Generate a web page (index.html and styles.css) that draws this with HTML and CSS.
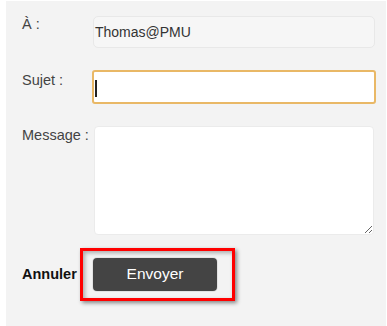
FILE: index.html
```html
<!DOCTYPE html>
<html lang="fr">
<head>
<meta charset="utf-8">
<title>Message</title>
<link rel="stylesheet" href="styles.css">
</head>
<body>
<div class="panel">
  <form class="form">
    <div class="label">À :</div>
    <div class="field field-readonly">Thomas@PMU</div>

    <div class="label label-sujet">Sujet :</div>
    <div class="field field-focus"><span class="caret"></span></div>

    <div class="label label-message">Message :</div>
    <textarea class="message"></textarea>

    <div class="cancel">Annuler</div>
    <div class="send-wrap">
      <button type="button" class="send">Envoyer</button>
    </div>
  </form>
</div>
</body>
</html>
```

FILE: styles.css
```css
html, body {
  margin: 0;
  padding: 0;
  background: #ffffff;
}

body {
  font-family: "Liberation Sans", Arial, sans-serif;
  overflow: hidden;
}

.panel {
  margin: 1px 1px 0 6px;
  background: #f3f3f3;
  height: 325px;
  box-sizing: border-box;
  padding: 15px 11px 0 16px;
}

.form {
  display: grid;
  grid-template-columns: 71px 282px;
  row-gap: 22px;
  margin: 0;
}

.label {
  font-size: 14.5px;
  line-height: 17px;
  color: #434343;
}

.label-sujet {
  padding-top: 2px;
}

.label-message {
  padding-top: 1px;
}

.field {
  box-sizing: border-box;
}

.field-readonly {
  height: 32px;
  background: #f6f6f6;
  border: 1px solid #e8e8e8;
  border-radius: 5px;
  font-size: 14px;
  line-height: 30px;
  color: #333333;
  padding-left: 1px;
}

.field-focus {
  height: 34px;
  margin: 0 -1px;
  background: #ffffff;
  border: 2px solid #e9b866;
  border-radius: 3px;
  display: flex;
  align-items: center;
  padding-left: 1px;
}

.caret {
  display: block;
  width: 1.5px;
  height: 17px;
  background: #222222;
  margin-top: 2px;
}

.message {
  display: block;
  box-sizing: border-box;
  height: 109px;
  width: 280px;
  margin: 0 0 0 1px;
  border: 1px solid #ebebeb;
  border-radius: 4px;
  background: #ffffff;
  resize: both;
  font-family: inherit;
}

.cancel {
  font-size: 14.5px;
  font-weight: bold;
  line-height: 17px;
  color: #111111;
  align-self: center;
  margin-top: 1px;
}

.send-wrap {
  position: relative;
  width: 124px;
  margin-top: 1px;
}

.send-wrap::after {
  content: "";
  position: absolute;
  top: -10px;
  left: -13px;
  right: -18px;
  bottom: -10px;
  border: 3px solid #ff0000;
  box-shadow: 2px 2px 4px rgba(0, 0, 0, 0.45), inset 2px 2px 4px rgba(0, 0, 0, 0.3);
  pointer-events: none;
}

.send {
  display: block;
  width: 124px;
  height: 33px;
  background: #444444;
  border: none;
  border-radius: 4px;
  color: #ffffff;
  font-family: "Liberation Sans", Arial, sans-serif;
  font-size: 15.5px;
  padding: 0 0 2px 0;
  box-shadow: 0 0 0 1px #e2e2e2;
}
```
